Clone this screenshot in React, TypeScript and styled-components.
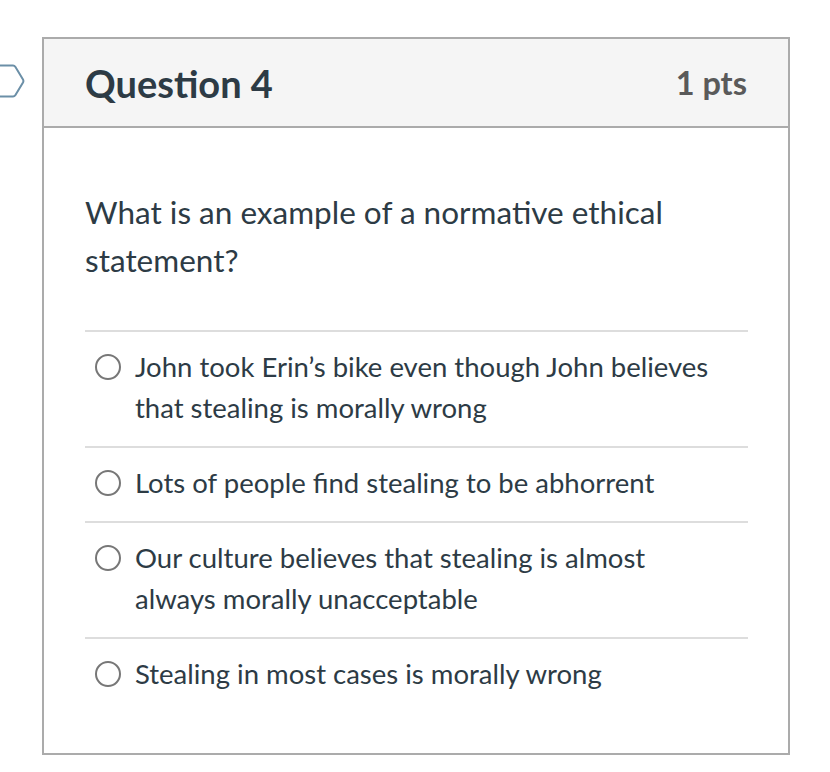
import * as React from 'react';
import styled, { createGlobalStyle } from 'styled-components';

const GlobalStyle = createGlobalStyle`
    html, body {
        margin: 0;
        padding: 0;
        background: #ffffff;
    }

    body {
        font-family: Lato, 'Noto Sans', 'Liberation Sans', sans-serif;
        color: #2d3b45;
    }
`;

const answers: string[][] = [
    ['John took Erin’s bike even though John believes', 'that stealing is morally wrong'],
    ['Lots of people find stealing to be abhorrent'],
    ['Our culture believes that stealing is almost', 'always morally unacceptable'],
    ['Stealing in most cases is morally wrong'],
];

function Flag(): React.ReactElement {
    return (
        <FlagIcon width="43" height="34" viewBox="0 0 43 34" aria-hidden="true">
            <path
                d="M-6 1.5 H13 Q14.5 1.5 15.3 2.8 L23 15.6 Q23.8 17 23 18.4 L15.3 31.2 Q14.5 32.5 13 32.5 H-6"
                fill="none"
                stroke="#6b8fa7"
                strokeWidth="2"
                strokeLinejoin="round"
            />
        </FlagIcon>
    );
}

export default function App(): React.ReactElement {
    return (
        <Page>
            <GlobalStyle />
            <FlagColumn>
                <Flag />
            </FlagColumn>
            <Card>
                <Header>
                    <Title>Question 4</Title>
                    <Points>1 pts</Points>
                </Header>
                <Body>
                    <QuestionText>
                        What is an example of a normative ethical
                        <br />
                        statement?
                    </QuestionText>
                    <Answers>
                        {answers.map((lines, i) => (
                            <Answer key={i}>
                                <Radio />
                                <AnswerText>
                                    {lines.map((line, j) => (
                                        <React.Fragment key={j}>
                                            {j > 0 && <br />}
                                            {line}
                                        </React.Fragment>
                                    ))}
                                </AnswerText>
                            </Answer>
                        ))}
                    </Answers>
                </Body>
            </Card>
        </Page>
    );
}

const Page = styled.div`
    display: flex;
    align-items: flex-start;
    padding-top: 37px;
`;

const FlagColumn = styled.div`
    width: 42px;
    flex-shrink: 0;
    padding-top: 27px;
`;

const FlagIcon = styled.svg`
    display: block;
`;

const Card = styled.div`
    width: 744px;
    border: 2px solid #ababab;
    background: #ffffff;
`;

const Header = styled.div`
    display: flex;
    align-items: center;
    justify-content: space-between;
    height: 87px;
    padding: 0 41px 0 41px;
    background: #f5f5f5;
    border-bottom: 2px solid #ababab;
`;

const Title = styled.h2`
    margin: 0;
    font-size: 38px;
    font-weight: 700;
    color: #2d3b45;
`;

const Points = styled.div`
    font-size: 32.5px;
    font-weight: 700;
    color: #5a5a5a;
`;

const Body = styled.div`
    padding: 60px 40px 41px 41px;
`;

const QuestionText = styled.div`
    font-size: 31.5px;
    line-height: 48px;
    color: #2d3b45;
`;

const Answers = styled.div`
    margin-top: 46px;
`;

const Answer = styled.div`
    display: flex;
    align-items: flex-start;
    gap: 14px;
    padding: 14px 0 18px 10px;
    border-top: 2px solid #dddddd;
`;

const Radio = styled.span`
    flex-shrink: 0;
    box-sizing: border-box;
    width: 26px;
    height: 26px;
    margin-top: 8px;
    border: 2px solid #777777;
    border-radius: 50%;
    background: #ffffff;
`;

const AnswerText = styled.div`
    font-size: 27.5px;
    line-height: 41px;
    color: #2d3b45;
`;
